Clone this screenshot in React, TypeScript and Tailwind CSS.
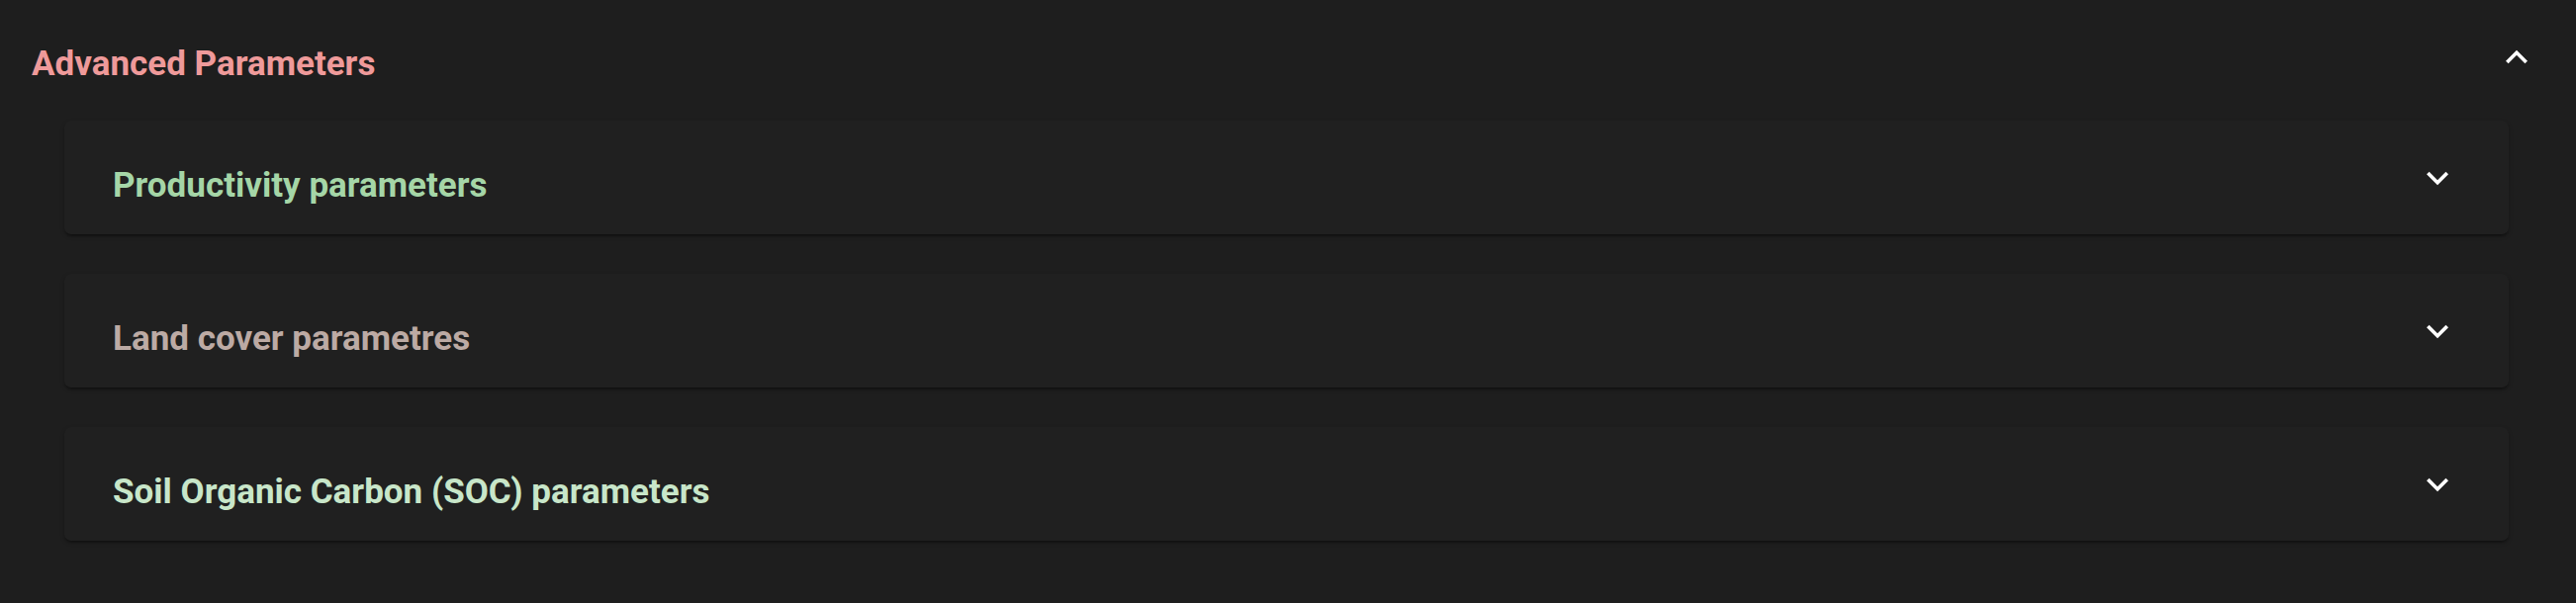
import React from "react";

const ExpandMore = ({ className }: { className?: string }) => (
  <svg viewBox="0 0 24 24" className={className} fill="currentColor" aria-hidden="true">
    <path d="M16.59 8.59 12 13.17 7.41 8.59 6 10l6 6 6-6z" />
  </svg>
);

const ExpandLess = ({ className }: { className?: string }) => (
  <svg viewBox="0 0 24 24" className={className} fill="currentColor" aria-hidden="true">
    <path d="m12 8-6 6 1.41 1.41L12 10.83l4.59 4.58L18 14z" />
  </svg>
);

const cards = [
  { title: "Productivity parameters", color: "text-[#a5d6a7]" },
  { title: "Land cover parametres", color: "text-[#bcaaa4]" },
  { title: "Soil Organic Carbon (SOC) parameters", color: "text-[#c8e6c9]" },
];

export default function App() {
  return (
    <div className="w-[2604px] h-[610px] bg-[#1e1e1e] font-['Roboto',sans-serif] overflow-hidden">
      <div className="flex items-start justify-between pl-[32px] pr-[38px] h-[122px]">
        <div className="mt-[45px] text-[35px] leading-[40px] font-bold text-[#ef9a9a]">
          Advanced Parameters
        </div>
        <ExpandLess className="mt-[36px] w-[44px] h-[44px] text-white" />
      </div>
      <div className="flex flex-col gap-[40px] pl-[65px] pr-[68px]">
        {cards.map((c) => (
          <div
            key={c.title}
            className="h-[115px] rounded-[7px] bg-[#202020] shadow-[0_3px_2px_-2px_rgba(0,0,0,0.25),0_2px_2px_0_rgba(0,0,0,0.16),0_2px_5px_0_rgba(0,0,0,0.14)] flex items-center justify-between pl-[49px] pr-[50px]"
          >
            <div className={`pt-[17px] text-[35px] leading-[40px] font-bold ${c.color}`}>
              {c.title}
            </div>
            <ExpandMore className="w-[44px] h-[44px] text-white" />
          </div>
        ))}
      </div>
    </div>
  );
}
